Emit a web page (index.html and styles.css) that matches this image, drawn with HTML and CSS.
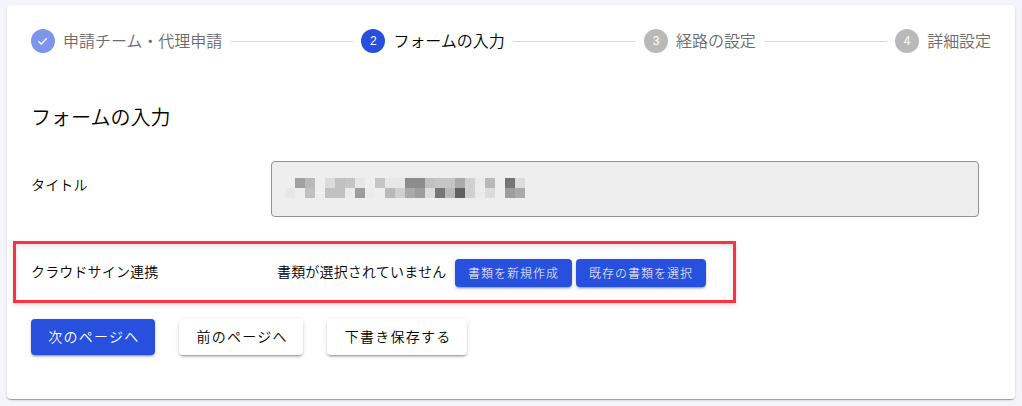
FILE: index.html
```html
<!DOCTYPE html>
<html lang="ja">
<head>
<meta charset="UTF-8">
<title>フォームの入力</title>
<link rel="stylesheet" href="styles.css">
</head>
<body>
<div class="card">
    <div class="stepper">
        <div class="step done">
            <span class="step-icon">
                <svg width="24" height="24" viewBox="0 0 24 24"><path d="M7.3 12.2l2.9 2.9 5.6-5.9" fill="none" stroke="#fff" stroke-width="1.3"/></svg>
            </span>
            <span class="step-text">申請チーム・代理申請</span>
        </div>
        <div class="line"></div>
        <div class="step active"><span class="step-icon">2</span><span class="step-text">フォームの入力</span></div>
        <div class="line"></div>
        <div class="step"><span class="step-icon">3</span><span class="step-text">経路の設定</span></div>
        <div class="line"></div>
        <div class="step"><span class="step-icon">4</span><span class="step-text">詳細設定</span></div>
    </div>

    <h2>フォームの入力</h2>

    <form>
        <div class="row">
            <div class="label title-label">タイトル</div>
            <div class="field">
                <svg width="240" height="20" viewBox="0 0 24 2" shape-rendering="crispEdges">
                    <path fill="#a0a0a0" d="M1 0h1v1h-1z"/>
                    <path fill="#b9b9b9" d="M2 0h1v1h-1zM20 0h1v1h-1zM10 1h1v1h-1zM16 1h1v1h-1z"/>
                    <path fill="#dcdcdc" d="M4 0h1v1h-1zM23 0h1v1h-1zM14 1h1v1h-1zM20 1h1v1h-1z"/>
                    <path fill="#c0c0c0" d="M5 0h1v1h-1zM14 0h1v1h-1zM2 1h1v1h-1zM4 1h2v1h-2z"/>
                    <path fill="#c5c5c5" d="M6 0h1v1h-1zM9 0h1v1h-1zM15 0h2v1h-2z"/>
                    <path fill="#e7e7e7" d="M7 0h1v1h-1zM10 0h2v1h-2zM0 1h1v1h-1z"/>
                    <path fill="#ebebeb" d="M19 0h1v2h-1zM6 1h1v1h-1zM8 1h1v1h-1z"/>
                    <path fill="#8d8d8d" d="M12 0h2v1h-2z"/>
                    <path fill="#aaaaaa" d="M17 0h1v1h-1zM12 1h1v1h-1zM23 1h1v1h-1z"/>
                    <path fill="#d0d0d0" d="M18 0h1v2h-1zM11 1h1v1h-1z"/>
                    <path fill="#767676" d="M22 0h1v1h-1zM15 1h1v1h-1z"/>
                    <path fill="#9d9d9d" d="M7 1h1v1h-1zM13 1h1v1h-1zM22 1h1v1h-1z"/>
                    <path fill="#606060" d="M17 1h1v1h-1z"/>
                </svg>
            </div>
        </div>

        <div class="row highlight">
            <div class="label">クラウドサイン連携</div>
            <div class="documents">
                <span>書類が選択されていません</span>
                <button type="button" class="btn small primary">書類を新規作成</button>
                <button type="button" class="btn small primary">既存の書類を選択</button>
            </div>
        </div>

        <div class="actions">
            <button type="button" class="btn primary">次のページへ</button>
            <button type="button" class="btn">前のページへ</button>
            <button type="button" class="btn">下書き保存する</button>
        </div>
    </form>
</div>
</body>
</html>
```

FILE: styles.css
```css
* { box-sizing: border-box; }
body { margin: 0; padding: 5px 7px; background: #f4f5fa; color: #000; font-family: "Noto Sans CJK JP", sans-serif; font-weight: 350; font-size: 14px; }
.card { height: 394px; padding: 24px; background: #fff; border-radius: 4px; box-shadow: 0 2px 1px -1px rgba(0,0,0,.2), 0 1px 1px rgba(0,0,0,.14), 0 1px 3px rgba(0,0,0,.12); }

.stepper { display: flex; align-items: center; gap: 8px; height: 24px; }
.step { display: flex; align-items: center; gap: 8px; font-size: 16px; line-height: 24px; color: #6c6c6c; white-space: nowrap; }
.step.active { color: #000; }
.step-text { padding-bottom: 2px; letter-spacing: -.04px; }
.step-icon { width: 24px; height: 24px; border-radius: 50%; background: #b9b9b9; color: #fff; font: 12px/24px "Liberation Sans", sans-serif; text-align: center; }
.step-icon svg { display: block; }
.active .step-icon { background: #2750de; }
.done .step-icon { background: #7d95ea; }
.line { flex: 1; height: 1px; background: #d9d9d9; }

h2 { margin: 48px 0 28px; font-size: 20px; font-weight: 350; line-height: 32px; }
.row { display: flex; align-items: center; }
.label { width: 240px; padding-bottom: 2px; letter-spacing: .15px; }
.title-label { padding-bottom: 10px; }
.field { width: 708px; height: 56px; padding: 16px 13px; border: 1px solid #919191; border-radius: 4px; background: #eee; }
.field svg { display: block; }

.highlight { width: 723px; height: 62px; margin: 24px 0 16px -18px; padding-left: 15px; border: 3px solid #fb3340; box-shadow: 0 2px 5px rgba(0,0,0,.12), inset 0 2px 5px rgba(0,0,0,.12); }
.documents { display: flex; align-items: center; gap: 4px; margin-left: 6px; padding-top: 2px; letter-spacing: .15px; }
.documents span { margin-right: 4.2px; padding-bottom: 4px; letter-spacing: .18px; }

.actions { display: flex; gap: 24px; }
.btn { height: 36px; padding: 0 15.65px 2px 17.3px; border: none; border-radius: 4px; background: #fff; color: #000; font-family: inherit; font-weight: 350; font-size: 14px; letter-spacing: 1.25px; white-space: nowrap; box-shadow: 0 3px 1px -2px rgba(0,0,0,.2), 0 2px 2px rgba(0,0,0,.14), 0 1px 5px rgba(0,0,0,.12); cursor: pointer; }
.btn.primary { background: #2750de; color: #fff; }
.btn.small { height: 28px; padding: 0 12.5px 1px 13.5px; font-size: 12px; font-weight: 300; letter-spacing: 1px; }
```
